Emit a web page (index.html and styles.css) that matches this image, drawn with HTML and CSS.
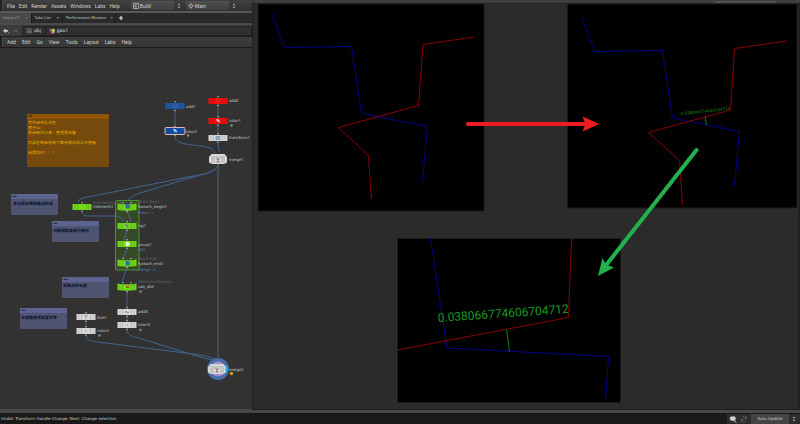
FILE: index.html
```html
<!DOCTYPE html>
<html lang="en">
<head>
<meta charset="utf-8">
<title>obj/geo1</title>
<link rel="stylesheet" href="styles.css">
</head>
<body>
<div class="app">
  <header class="topbar">
    <i class="grip"></i>
    <nav class="menu">
      <button>File</button><button>Edit</button><button>Render</button><button>Assets</button><button>Windows</button><button>Labs</button><button>Help</button>
    </nav>
    <div class="picker">
      <svg class="ico" viewBox="0 0 6 6"><path d="M.5.5h5v5h-5zM3 .5v5M.5 3H3" fill="none" stroke="#bbb" stroke-width=".8"/></svg>
      <select aria-label="Desktop"><option>Build</option></select>
    </div>
    <svg class="spin" viewBox="0 0 4 6"><path d="M.5 2.3 2 .5l1.5 1.8zM.5 3.7 2 5.5l1.5-1.8z" fill="#aaa"/></svg>
    <div class="picker">
      <svg class="ico" viewBox="0 0 6 6"><path d="M3 0 4 1.4H2zM3 6 2 4.600h2zM0 3l1.400-1v2zM6 3 4.600 4V2z" fill="#bbb"/><circle cx="3" cy="3" r="1.500" fill="none" stroke="#bbb" stroke-width=".7"/></svg>
      <select aria-label="Radial menu"><option>Main</option></select>
    </div>
    <svg class="spin" viewBox="0 0 4 6"><path d="M.5 2.300 2 .5l1.500 1.800zM.5 3.700 2 5.500l1.500-1.800z" fill="#aaa"/></svg>
    <i class="shelf"></i>
  </header>

  <main class="work">
    <section class="pane">
      <div class="tabs">
        <button class="tab active">/obj/geo1 <span>×</span></button>
        <button class="tab">Take List <span>×</span></button>
        <button class="tab">Performance Monitor <span>×</span></button>
        <button class="add" aria-label="New tab"><svg class="ico" viewBox="0 0 6 6"><path d="M3 1v4M1 3h4" stroke="#ddd" stroke-width="1.200"/></svg></button>
      </div>
      <div class="path">
        <button aria-label="Back"><svg class="arrow" viewBox="0 0 8 6"><path d="M1 2.800 3.800.4v1.500H6v1.800H3.800v1.500z" fill="#ccc"/><path d="M6 4.600h1.600l-.8 1z" fill="#ccc"/></svg></button>
        <button aria-label="Forward"><svg class="arrow" viewBox="0 0 8 6"><path d="M6.500 2.800 3.800.4v1.500H1.500v1.800h2.300v1.500z" fill="#555"/></svg></button>
        <nav class="crumbs">
          <a href="#obj"><svg class="ico" viewBox="0 0 6 6"><path d="M.3.600h5.400v1H.3zM1 2.300h4.600v3H1z" fill="#6d7a72"/><path d="M2.500 2.300v3M4 2.300v3" stroke="#333" stroke-width=".5"/></svg>obj</a>
          <svg class="chev" viewBox="0 0 4 10"><path d="M.5 0 3.500 5 .5 10" fill="none" stroke="#1c1c1c"/></svg>
          <a href="#geo1"><svg class="ico" viewBox="0 0 6 6"><path d="M.5.800h2.800v3H.5z" fill="#3f74c8"/><circle cx="4.300" cy="2.300" r="1.600" fill="#e8c23c"/><path d="M1.500 3.300h2.400v2.400H1.500z" fill="#c9432f"/><path d="M3.700 3.200h1.600v2H3.700z" fill="#ddd"/></svg>geo1</a>
        </nav>
      </div>
      <div class="netbar">
        <i class="grip"></i>
        <nav class="menu wide">
          <button>Add</button><button>Edit</button><button>Go</button><button>View</button><button>Tools</button><button>Layout</button><button>Labs</button><button>Help</button>
        </nav>
      </div>
      <svg class="network" viewBox="0 48 252 361" preserveAspectRatio="xMinYMin meet" role="img" aria-label="Node network">
        <defs>
          <symbol id="node" viewBox="-10 -5 20 10" overflow="visible">
            <path d="M-9.500-3h19v6h-19z"/>
            <path d="M-7-3v6M-4.500-3v6M4.500-3v6M7-3v6" stroke="#000" stroke-opacity=".2" stroke-width=".7"/>
            <circle cy="-4.200" r=".8" fill="#bbb"/><circle cy="4.200" r=".8" fill="#bbb"/>
          </symbol>
          <symbol id="arched" viewBox="-10 -5 20 10" overflow="visible">
            <path d="M-9.500-3.500Q0-1.800 9.500-3.500V3Q0 4.500-9.500 3z"/>
            <path d="M-7-3v6M-4.500-2.600v6M4.500-2.600v6M7-3v6" stroke="#000" stroke-opacity=".2" stroke-width=".7"/>
            <circle cx="-4" cy="-4.300" r=".8" fill="#bbb"/><circle cx="4" cy="-4.300" r=".8" fill="#bbb"/><circle cy="4.600" r=".8" fill="#bbb"/>
          </symbol>
          <symbol id="merge" viewBox="-10 -5 20 10" overflow="visible">
            <path d="M-6.500-5h13l2.500 3v5.500L6 5H-6l-3-1.500V-2z"/>
            <path d="M-7-2H7M-6-1v5M-4-1v5M4-1v5M6-1v5" stroke="#555" stroke-opacity=".45" stroke-width=".7" fill="none"/>
            <path d="M-1.500-1 0 1 1.500-1M0 0v3M-1.500 3h3" stroke="#8a5060" stroke-width=".8" fill="none"/>
          </symbol>
          <symbol id="dab" viewBox="-3 -3 6 6" overflow="visible">
            <path d="M-2-1.800h2.200l1.800 2-1 1.300-2-1.500z" fill="#e4e4f0"/><path d="M0 0 2 2" stroke="#6a7fa5" stroke-width=".7"/>
          </symbol>
          <symbol id="zig" viewBox="-3 -3 6 6" overflow="visible">
            <path d="M-2.500 1-1-1 .8 1 2.500-.6" fill="none" stroke="#a04a5a" stroke-width=".7"/>
          </symbol>
          <symbol id="note" viewBox="0 0 47 21" overflow="visible">
            <rect width="47" height="21" rx="1" fill="#4f5570"/><path d="M0 5V1q0-1 1-1h45q1 0 1 1v4z" fill="#5c6390"/><path d="M1.500 2.300h4" stroke="#20233a"/>
          </symbol>
        </defs>

        <rect class="loop" x="115.500" y="200.500" width="23.500" height="69.500" rx="1"/>

        <g class="wires">
          <path d="M175 110v17M218 105v12M218 125v10M218 142q0 7 1.500 10"/>
          <path d="M175 136c0 14 38 5 40 17"/>
          <path d="M218 163v196"/>
          <path d="M218 165c-1 7-18 10-30 12L88 197q-9 1-10 5"/>
          <path d="M218 165c0 7-18 10-28 13l-50 15q-12 4-13 9"/>
          <path d="M82 212c1 4 4 4 8 4h25q8 0 8 6"/>
          <path d="M127 211q3 4 4 11M127 231l-3 9M127 249l-4 10M127 268l-5 14M127 292v16M127 316v5M86 322v5"/>
          <path d="M127 330c0 5 6 7 12 8l58 18q14 4 19 5"/>
          <path d="M86 336c0 4 6 5 12 6l95 12q17 2 24 6"/>
        </g>

        <g fill="#1f5aa8"><use href="#node" x="165" y="101" width="20" height="10"/></g>
        <rect x="164.500" y="127" width="21" height="8" rx="2" fill="#e0b6b0"/>
        <g fill="#1450a8"><use href="#node" x="165" y="126" width="20" height="10"/></g>
        <g fill="#f00d0d"><use href="#node" x="208" y="96" width="20" height="10"/><use href="#node" x="208" y="116" width="20" height="10"/></g>
        <g fill="#d8d8d8">
          <use href="#node" x="208" y="133" width="20" height="10"/>
          <use href="#node" x="117" y="307" width="20" height="10"/><use href="#node" x="117" y="320" width="20" height="10"/>
          <use href="#node" x="76" y="312" width="20" height="10"/><use href="#node" x="76" y="326" width="20" height="10"/>
          <use href="#merge" x="208" y="154" width="20" height="10"/>
        </g>
        <g fill="#72d81a">
          <use href="#node" x="72" y="202" width="20" height="10"/><use href="#arched" x="117" y="202" width="20" height="10"/>
          <use href="#node" x="117" y="221" width="20" height="10"/><use href="#node" x="117" y="239" width="20" height="10"/>
          <use href="#arched" x="117" y="258" width="20" height="10"/><use href="#arched" x="117" y="282" width="20" height="10"/>
        </g>
        <circle cx="218" cy="369" r="11" fill="#466da8"/><circle cx="218" cy="369" r="7.500" fill="#a78bd0"/>
        <path d="M224 366h3v6h-3z" fill="#18b6f0"/>
        <g fill="#d8d8d8"><use href="#merge" x="207" y="364" width="20" height="10"/></g>
        <path d="M225.500 366.500h2v5h-2z" fill="#18b6f0"/>

        <use href="#dab" x="172" y="128" width="6" height="6"/><use href="#dab" x="215" y="118" width="6" height="6"/>
        <use href="#zig" x="172" y="103" width="6" height="6"/><use href="#zig" x="215" y="98" width="6" height="6"/><use href="#zig" x="124" y="309" width="6" height="6"/>
        <path d="M216 136.500h4v3h-4zM218 136.500v3" fill="#a9c2d8" stroke="#5d7f9c" stroke-width=".6"/>
        <path d="M125.500 204h3l1.500 1.500v3h-4.500zM125.500 261h3l1.500 1.500v3h-4.500z" fill="#2f6fa8"/>
        <path d="m125.500 224 3 3.500" stroke="#7c6a8c" stroke-width="1.500"/>
        <circle cx="127.500" cy="244" r="2.200" fill="#f6f0c8"/>
        <path d="M126 286h3v2h-3z" fill="#a8641c"/>
        <path d="m126 323.500 2.500 3M84.500 329.500l2.500 3M84 315.500h4M86 315.500v4" stroke="#7f9fb8" stroke-width=".8"/>
        <g fill="#7c9686"><circle cx="188" cy="135.500" r="1.200"/><circle cx="231.500" cy="125.500" r="1.200"/><circle cx="140.500" cy="291.500" r="1.200"/><circle cx="140.500" cy="330" r="1.200"/><circle cx="99.500" cy="335.500" r="1.200"/></g>
        <circle cx="231.500" cy="373.500" r="1.700" fill="#c8a020"/>

        <g class="labels dim"><text x="93" y="204">Intersection An</text><text x="138" y="203">Block Begin</text><text x="138" y="260">Block End</text><text x="138" y="283">Attribute Wrangle</text></g>
        <g class="labels">
          <text x="186" y="108">add1</text><text x="185" y="133">color2</text>
          <text x="229" y="102">add2</text><text x="229" y="122">color1</text><text x="229" y="139">transform1</text><text x="229" y="161">merge1</text>
          <text x="93" y="208">intersects1</text><text x="138" y="208">foreach_begin1</text><text x="138" y="227">ray1</text>
          <text x="138" y="246">group1</text><text x="138" y="265">foreach_end1</text><text x="138" y="288">calc_dist</text>
          <text x="138" y="313">add3</text><text x="138" y="326">color3</text><text x="97" y="319">font1</text><text x="97" y="332">color4</text>
          <text x="229" y="371">merge2</text>
        </g>
        <g class="labels info"><text x="138" y="214">Piece : 1</text><text x="138" y="251">dist</text><text x="138" y="271">Merge : 2</text></g>

        <rect x="27" y="114" width="82" height="53" rx="1" fill="#754a0c"/>
        <path d="M27 119v-4q0-1 1-1h80q1 0 1 1v4z" fill="#8d5504"/><path d="M28.500 116h3.500" stroke="#3a2608" stroke-width="1.200"/>
        <g class="memo gold" lang="zh">
          <text x="28" y="124">文件由帅队求生</text><text x="28" y="129">基于rui</text><text x="28" y="134">免费制作分享，整理及收集</text>
          <text x="28" y="144">工具在每条视频下都有解说和公开链接</text><text x="28" y="154">无需购买！！！</text>
        </g>
        <use href="#note" x="11" y="194" width="47" height="21"/><use href="#note" x="52" y="221" width="47" height="21"/>
        <use href="#note" x="62" y="277" width="47" height="21"/><use href="#note" x="20" y="308" width="47" height="21"/>
        <g class="memo" lang="zh">
          <text x="13" y="205">求与原始物体最近的点</text><text x="53" y="232">对最短距离进行投射</text>
          <text x="63" y="287">求两点的长度</text><text x="21" y="319">长度数值关联至文字</text>
        </g>
      </svg>
    </section>

    <section class="board">
      <svg viewBox="253 4 547 405" preserveAspectRatio="xMinYMin meet" role="img" aria-label="Viewport results">
        <g class="view"><path d="M258 4h226v207H258zM567.500 4h229.500v204H567.500zM397.500 238.500h223v164h-223z"/></g>
        <g class="blue">
          <path d="M272 14.500 284.500 47.500 351.500 46.500 361.500 113.500 427.500 126.500 422.500 181"/>
          <path d="M582 18 594.500 51.500 662.500 50.500 672.500 118 739.500 131.500 734.500 185.500"/>
          <path d="M430.500 238.500 447 348 608.500 356.500 605.500 402.500"/>
        </g>
        <g class="red">
          <path d="M474 37 423 44.500 418.500 105.500 338.500 127.500 368.500 155.500 371.500 198.500"/>
          <path d="M787 41 734.500 48.500 730.500 110 648.500 132.500 679.500 160.500 682.500 204.500"/>
          <path d="M571.500 238.500 568.500 317.500 397.500 350"/>
        </g>
        <path class="gap" d="m705 117 1.500 8M506.500 329.500l3 22"/>
        <text class="dist small" transform="translate(681 115) rotate(-6)">0.038066774606704712</text>
        <text class="dist" transform="translate(438 322) rotate(-4)">0.038066774606704712</text>
        <path d="M468 124h117" stroke="#ed1c24" stroke-width="4" stroke-linecap="round"/><path d="m599.500 124-17 7.500 3-7.500-3-7.500z" fill="#ed1c24"/>
        <path d="M696.500 150 607 264" stroke="#22b14c" stroke-width="4" stroke-linecap="round"/><path d="m598 276 4.500-18 3.500 6.500 8 3z" fill="#22b14c"/>
      </svg>
    </section>
  </main>

  <footer class="status">
    <span>Undid: Transform Handle Change; Next: Change selection</span>
    <div class="update">
      <svg class="cloud" viewBox="0 0 8 8"><ellipse cx="3.800" cy="3.500" rx="3" ry="2.300" fill="#ccc"/><path d="M4 5l3.500 2.500" stroke="#bbb"/></svg>
      <svg class="cloud" viewBox="0 0 8 8"><path d="M6.500 3.500A2.600 2.600 0 0 0 2 2.200M1.500 4.500A2.600 2.600 0 0 0 6 5.800M6.600 1v2.500H4.500M1.400 7V4.500h2.100" fill="none" stroke="#666" stroke-width=".8"/></svg>
      <select aria-label="Update mode"><option>Auto Update</option></select>
      <svg class="spin" viewBox="0 0 4 6"><path d="M.5 2.300 2 .5l1.500 1.800zM.5 3.700 2 5.500l1.500-1.800z" fill="#aaa"/></svg>
    </div>
  </footer>
</div>
</body>
</html>
```
FILE: styles.css
```css
* { box-sizing: border-box; }
body {
  margin: 0;
  background: #2b2b2b;
  color: #d0d0d0;
  font: 5px/8px Roboto, "Noto Sans CJK SC", sans-serif;
  text-rendering: geometricPrecision;
}
button, select {
  margin: 0;
  padding: 0;
  border: 0;
  background: none;
  color: inherit;
  font: inherit;
  appearance: none;
}
a { color: inherit; text-decoration: none; }
svg { display: block; flex: none; }

.app {
  display: grid;
  grid-template-rows: 11px 1fr 15px;
  height: 100vh;
}
.ico { width: 6px; height: 6px; }
.spin { width: 4px; height: 6px; }
.grip {
  width: 3px;
  align-self: stretch;
  margin-right: 4px;
  border-right: 1px solid #484848;
  background: #222;
}
.menu { display: flex; gap: 4px; }
.wide { gap: 6px; }

.topbar {
  display: flex;
  align-items: center;
  background: linear-gradient(#404040, #303030);
}
.picker {
  display: flex;
  align-items: center;
  gap: 1px;
  width: 43px;
  height: 9px;
  margin: 0 3px 0 11px;
  padding-left: 2px;
  background: linear-gradient(#505050, #3e3e3e);
}
.picker + .spin + .picker { margin-left: 5px; }
.picker select { flex: 1; }
.shelf {
  width: 61px;
  height: 9px;
  margin: 0 24px 0 auto;
  background: #505050;
}

.work {
  display: grid;
  grid-template-columns: 63fr 137fr;
  min-height: 0;
}
.pane {
  display: flex;
  flex-direction: column;
  min-width: 0;
  border-top: 2px solid #585858;
  background: #323232;
}
.tabs {
  display: flex;
  height: 12px;
  border-bottom: 2px solid #4a4a4a;
  background: #292929;
  font: 4px/8px "Noto Sans", sans-serif;
}
.tab {
  display: flex;
  gap: 6px;
  align-items: center;
  padding: 0 3px;
  border-right: 1px solid #1c1c1c;
}
.active { padding-left: 2px; background: #484848; color: #999; font-style: italic; }
.tab:nth-child(3) { gap: 4px; padding-right: 2px; }
.add { padding: 0 2px; }
.path {
  display: flex;
  align-items: center;
  height: 12px;
  border-bottom: 1px solid #1c1c1c;
  background: #3c3c3c;
}
.arrow { width: 8px; height: 6px; margin: 0 0 0 2px; }
.crumbs {
  display: flex;
  flex: 1;
  align-items: center;
  gap: 2px;
  height: 10px;
  margin-left: 2px;
  padding-left: 3px;
  border: 1px solid #222;
  background: #303030;
}
.crumbs a { display: flex; align-items: center; gap: 2px; }
.chev { width: 4px; height: 10px; }
.netbar {
  display: flex;
  align-items: center;
  height: 11px;
  border-bottom: 1px solid #1c1c1c;
  background: linear-gradient(#3e3e3e, #343434);
}
.network { flex: 1; width: 100%; min-height: 0; }

.loop { fill: #364a2a; stroke: #4f9428; }
.wires { fill: none; stroke: #426490; }
.labels { fill: #ccc; font: 4px "Noto Sans", sans-serif; }
.dim { fill: #686868; }
.info { fill: #5585b8; }
.memo { fill: #0c0f1c; font-size: 4px; font-weight: 700; }
.gold { fill: #f0a800; font-weight: 400; }

.board {
  position: relative;
  z-index: 1;
  margin: -8px 0 0;
  border: 1px solid #202020;
  border-width: 1px 2px 1px 1px;
  background: #2b2b2b;
  min-width: 0;
}
.board svg { width: calc(100% + 2px); }
.view { stroke: #1c1c1c; }
.blue, .red, .gap { fill: none; stroke: #00008c; }
.red { stroke: #8c0000; }
.gap { stroke: #008c18; }
.dist { fill: #1c9a20; font: 12px Roboto, sans-serif; }
.small { font: 4px "DejaVu Sans", sans-serif; }

.status {
  display: flex;
  align-items: center;
  justify-content: space-between;
  border-top: 4px solid #484848;
  padding-left: 1px;
  background: #191919;
  font: 4px/8px "DejaVu Sans", sans-serif;
}
.update {
  display: flex;
  align-items: center;
  gap: 3px;
  height: 10px;
  padding: 0 4px 0 2px;
  background: #2c2c2c;
}
.cloud { width: 8px; height: 8px; }
.update select {
  width: 38px;
  height: 10px;
  background: #444;
  text-align: center;
}
```
